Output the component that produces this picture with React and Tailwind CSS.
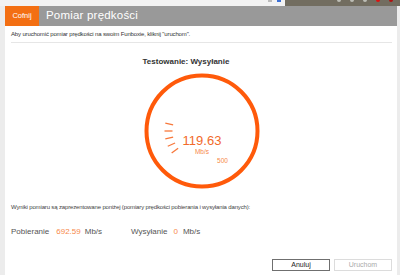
const TICKS = [192, 180, 168, 156, 144];

function Gauge() {
  return (
    <svg width="120" height="120" viewBox="0 0 120 120" className="block">
      <circle cx="60" cy="60" r="55.5" fill="none" stroke="#ff5a0a" strokeWidth="4" />
      {TICKS.map((deg) => {
        const a = (deg * Math.PI) / 180;
        return (
          <line
            key={deg}
            x1={60 + 29.5 * Math.cos(a)}
            y1={60 + 29.5 * Math.sin(a)}
            x2={60 + 37.5 * Math.cos(a)}
            y2={60 + 37.5 * Math.sin(a)}
            stroke="#f7773a"
            strokeWidth="1.3"
          />
        );
      })}
      <text x="60" y="74" textAnchor="middle" fill="#f26a2a" fontSize="13" fontFamily="Liberation Sans, Arial, sans-serif">
        119.63
      </text>
      <text x="60" y="83" textAnchor="middle" fill="#f7894a" fontSize="6.5" fontFamily="Liberation Sans, Arial, sans-serif">
        Mb/s
      </text>
      <text x="80.5" y="92" textAnchor="middle" fill="#f7894a" fontSize="6.5" fontFamily="Liberation Sans, Arial, sans-serif">
        500
      </text>
    </svg>
  );
}

export default function App() {
  return (
    <div className="w-[400px] h-[275px] overflow-hidden bg-[#ececec] flex flex-col font-['Liberation_Sans',Arial,sans-serif]">
      {/* browser chrome strip */}
      <div className="h-[6px] flex">
        <div className="flex-1 bg-[#f2f2f2] flex justify-end items-start gap-[5px] pr-[4px]">
          <span className="w-[4px] h-[2px] bg-[#bbb]" />
          <span className="w-[4px] h-[2px] bg-[#3b6fd6]" />
        </div>
        <div className="w-[115px] bg-[#726d60] flex items-start justify-end gap-[9px] pr-[7px]">
          <span className="w-[4px] h-[2px] rounded-b-full bg-[#bdbdb5]" />
          <span className="w-[4px] h-[2px] rounded-b-full bg-[#bdbdb5]" />
          <span className="w-[4px] h-[2px] rounded-b-full bg-[#bdbdb5]" />
          <span className="w-[4px] h-[2px] rounded-b-full bg-[#e01010]" />
          <span className="w-[4px] h-[2px] rounded-b-full bg-[#b01010]" />
        </div>
      </div>

      <div className="flex-1 flex flex-col ml-[5px] mr-[3px]">
        {/* header */}
        <div className="h-[20px] flex shrink-0">
          <div className="w-[34px] bg-[#f36f13] flex items-center justify-center text-white text-[7.5px]">
            Cofnij
          </div>
          <div className="flex-1 bg-[#999999] flex items-center pl-[7px] text-white text-[11.5px] tracking-[0.2px]">
            Pomiar prędkości
          </div>
        </div>

        {/* panel */}
        <div className="flex-1 bg-white pl-[6px] pr-[5px] flex flex-col">
          <div className="pt-[4px] text-[6px] leading-[9px] tracking-[-0.15px] text-[#333]">
            Aby uruchomić pomiar prędkości na swoim Funboxie, kliknij "uruchom".
          </div>
          <div className="mt-[3px] h-px bg-[#e6e6e6]" />

          <div className="mt-[14px] pr-[31px] text-center text-[8px] leading-[10px] font-bold text-[#333]">
            Testowanie: Wysyłanie
          </div>
          <div className="mt-[4px] flex justify-center">
            <Gauge />
          </div>

          <div className="mt-[12px] text-[6px] leading-[9px] tracking-[-0.15px] text-[#444]">
            Wyniki pomiaru są zaprezentowane poniżej (pomiary prędkości pobierania i wysyłania danych):
          </div>

          <div className="mt-[14px] flex items-center text-[8px] leading-[12px] text-[#555]">
            <span>Pobieranie</span>
            <span className="ml-[7px] text-[#f7894a]">692.59</span>
            <span className="ml-[4px]">Mb/s</span>
            <span className="ml-[29px]">Wysyłanie</span>
            <span className="ml-[6px] text-[#f7894a]">0</span>
            <span className="ml-[5px]">Mb/s</span>
          </div>

          <div className="mt-[21px] flex justify-end gap-[4px]">
            <button className="w-[58px] h-[12px] border border-[#6f6f6f] bg-white text-[7px] leading-[10px] text-[#222]">
              Anuluj
            </button>
            <button className="w-[58px] h-[12px] border border-[#dcdcdc] bg-white text-[7px] leading-[10px] text-[#aaa]">
              Uruchom
            </button>
          </div>
        </div>
      </div>
    </div>
  );
}
